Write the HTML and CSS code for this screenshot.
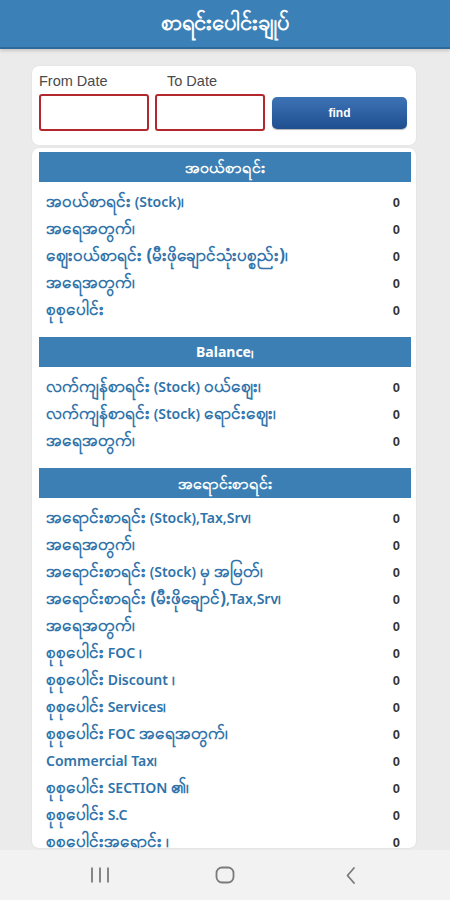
FILE: index.html
```html
<!DOCTYPE html>
<html lang="my">
<head>
<meta charset="utf-8">
<title>စာရင်းပေါင်းချုပ်</title>
<link rel="stylesheet" href="styles.css">
</head>
<body>
<div class="screen">
  <header class="appbar"><h1>စာရင်းပေါင်းချုပ်</h1></header>
  <main class="content">
    <section class="card filter">
      <div class="labels">
        <span class="lbl from">From Date</span>
        <span class="lbl">To Date</span>
      </div>
      <div class="controls">
        <input class="date" type="text">
        <input class="date" type="text">
        <button class="find">find</button>
      </div>
    </section>
    <section class="card report">
      <div class="group">
        <div class="ghead"><span class="my">အဝယ်စာရင်း</span></div>
        <div class="row"><span><span class="my">အဝယ်စာရင်း</span> (Stock)<span class="my">၊</span></span><b>0</b></div>
        <div class="row"><span><span class="my">အရေအတွက်၊</span></span><b>0</b></div>
        <div class="row"><span><span class="my">ဈေးဝယ်စာရင်း (မီးဖိုချောင်သုံးပစ္စည်း)၊</span></span><b>0</b></div>
        <div class="row"><span><span class="my">အရေအတွက်၊</span></span><b>0</b></div>
        <div class="row"><span><span class="my">စုစုပေါင်း</span></span><b>0</b></div>
      </div>
      <div class="group">
        <div class="ghead">Balance<span class="my">၊</span></div>
        <div class="row"><span><span class="my">လက်ကျန်စာရင်း</span> (Stock) <span class="my">ဝယ်ဈေး၊</span></span><b>0</b></div>
        <div class="row"><span><span class="my">လက်ကျန်စာရင်း</span> (Stock) <span class="my">ရောင်းဈေး၊</span></span><b>0</b></div>
        <div class="row"><span><span class="my">အရေအတွက်၊</span></span><b>0</b></div>
      </div>
      <div class="group">
        <div class="ghead"><span class="my">အရောင်းစာရင်း</span></div>
        <div class="row"><span><span class="my">အရောင်းစာရင်း</span> (Stock),Tax,Srv<span class="my">၊</span></span><b>0</b></div>
        <div class="row"><span><span class="my">အရေအတွက်၊</span></span><b>0</b></div>
        <div class="row"><span><span class="my">အရောင်းစာရင်း</span> (Stock) <span class="my">မှ အမြတ်၊</span></span><b>0</b></div>
        <div class="row"><span><span class="my">အရောင်းစာရင်း (မီးဖိုချောင်)</span>,Tax,Srv<span class="my">၊</span></span><b>0</b></div>
        <div class="row"><span><span class="my">အရေအတွက်၊</span></span><b>0</b></div>
        <div class="row"><span><span class="my">စုစုပေါင်း</span> FOC <span class="my">၊</span></span><b>0</b></div>
        <div class="row"><span><span class="my">စုစုပေါင်း</span> Discount <span class="my">၊</span></span><b>0</b></div>
        <div class="row"><span><span class="my">စုစုပေါင်း</span> Services<span class="my">၊</span></span><b>0</b></div>
        <div class="row"><span><span class="my">စုစုပေါင်း</span> FOC <span class="my">အရေအတွက်၊</span></span><b>0</b></div>
        <div class="row"><span>Commercial Tax<span class="my">၊</span></span><b>0</b></div>
        <div class="row"><span><span class="my">စုစုပေါင်း</span> SECTION <span class="my">၏၊</span></span><b>0</b></div>
        <div class="row"><span><span class="my">စုစုပေါင်း</span> S.C</span><b>0</b></div>
        <div class="row"><span><span class="my">စုစုပေါင်းအရောင်း ၊</span></span><b>0</b></div>
      </div>
    </section>
  </main>
  <nav class="navbar">
    <svg class="nav-ic" width="24" height="24" viewBox="0 0 24 24"><path d="M4 4.5v15M12 4.5v15M20 4.5v15" stroke="#7a7a7a" stroke-width="1.8" fill="none"/></svg>
    <svg class="nav-ic" width="24" height="24" viewBox="0 0 24 24"><rect x="3.5" y="4.5" width="17" height="15" rx="5.5" stroke="#7a7a7a" stroke-width="1.8" fill="none"/></svg>
    <svg class="nav-ic" width="24" height="24" viewBox="0 0 24 24"><path d="M16 5l-6.5 7.5 6.5 7.5" stroke="#7a7a7a" stroke-width="1.8" fill="none" stroke-linecap="round" stroke-linejoin="round"/></svg>
  </nav>
</div>
</body>
</html>
```
FILE: styles.css
```css
* { box-sizing: border-box; }
html, body { margin: 0; padding: 0; }
body {
  font-family: "Noto Sans", "DejaVu Sans", Roboto, sans-serif;
  background: #ebebeb;
}
.screen {
  width: 450px;
  height: 900px;
  display: flex;
  flex-direction: column;
  overflow: hidden;
}
.appbar {
  height: 49px;
  flex: none;
  background: #3b80b6;
  border-bottom: 2px solid #2c6a9c;
  box-shadow: 0 2px 3px rgba(0,0,0,0.15);
  display: flex;
  align-items: center;
  justify-content: center;
}
.appbar h1 {
  margin: 0;
  color: #fff;
  font-size: 22px;
  font-weight: 700;
}
.content {
  flex: 1;
  min-height: 0;
  padding: 17px 34px 0 32px;
  display: flex;
  flex-direction: column;
  gap: 3px;
  overflow: hidden;
}
.card {
  background: #fff;
  border-radius: 7px;
  box-shadow: 0 0 2px rgba(0,0,0,0.08);
}
.filter {
  flex: none;
  height: 79px;
  padding: 6px 9px 0 7px;
}
.labels {
  display: flex;
  font-family: "Liberation Sans", Arial, sans-serif;
  font-size: 14.5px;
  color: #4a4a4a;
  height: 19px;
  line-height: 19px;
}
.lbl.from { width: 128px; }
.controls {
  display: flex;
  align-items: center;
  gap: 6px;
  margin-top: 3px;
}
.date {
  width: 110px;
  height: 37px;
  border: 2px solid #b3282d;
  border-radius: 3px;
  background: #fff;
  margin: 0;
  padding: 0;
}
.find {
  margin-left: 1px;
  width: 136px;
  height: 32px;
  border: none;
  border-radius: 5px;
  background: linear-gradient(#3d73b6, #1f4f8f);
  color: #fff;
  font-family: "Liberation Sans", Arial, sans-serif;
  font-weight: 700;
  font-size: 12px;
  box-shadow: 0 1px 1px rgba(0,0,0,0.3);
}
.report {
  flex: 1;
  min-height: 0;
  overflow: hidden;
  padding: 4px 5px 0 7px;
  margin-bottom: 2px;
}
.group { margin-bottom: 15px; }
.ghead {
  height: 30px;
  background: #3b7fb4;
  color: #fff;
  font-weight: 700;
  font-size: 14px;
  line-height: 1;
  display: flex;
  align-items: center;
  justify-content: center;
  margin-bottom: 5px;
}
.ghead .my { font-size: 16px; }
.row {
  height: 27px;
  display: flex;
  align-items: center;
  justify-content: space-between;
  padding: 0 11px 0 7px;
  font-size: 14px;
  font-weight: 600;
  color: #2f73aa;
  white-space: nowrap;
  line-height: 1;
}
.row > span { margin-bottom: 1px; }
.my {
  font-size: 17px;
  font-weight: 700;
}
.row b {
  color: #333;
  font-size: 13px;
  margin-top: 3px;
  font-family: "Liberation Sans", Arial, sans-serif;
}
.navbar {
  flex: none;
  height: 50px;
  background: #f2f2f2;
  display: flex;
  align-items: center;
  justify-content: space-between;
  padding: 0 88px;
}
.nav-ic { display: block; }
```
